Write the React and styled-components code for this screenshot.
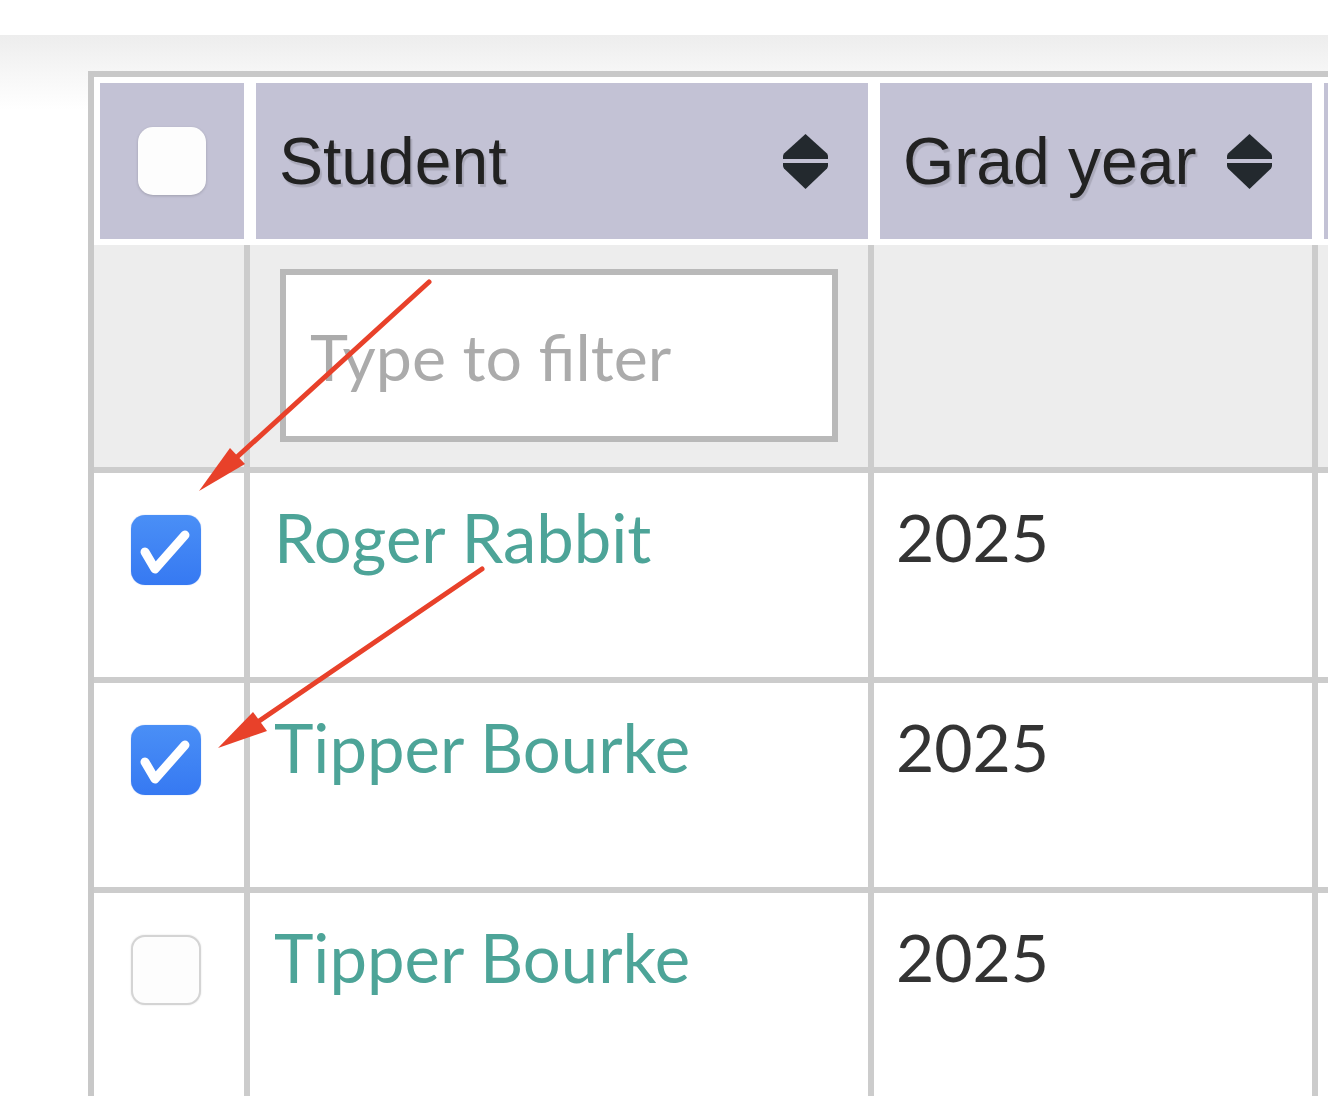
import React from 'react';
import styled, { createGlobalStyle } from 'styled-components';

const students = [
  { name: 'Roger Rabbit', year: 2025, checked: true },
  { name: 'Tipper Bourke', year: 2025, checked: true },
  { name: 'Tipper Bourke', year: 2025, checked: false },
];

function SortIcon() {
  return (
    <SortSvg viewBox="0 0 45 55">
      <path d="M22.5 0 L44 19.5 Q45 21 45 22.5 V25 H0 V22.5 Q0 21 1 19.5 Z" />
      <path d="M0 29 H45 V31.5 Q45 33 44 34.5 L22.5 55 L1 34.5 Q0 33 0 31.5 Z" />
    </SortSvg>
  );
}

function Checkbox({ checked }) {
  return (
    <Box checked={checked}>
      {checked && (
        <svg width="70" height="70" viewBox="0 0 70 70">
          <polyline
            points="14,37 24,54 54,20"
            fill="none"
            stroke="#fff"
            strokeWidth="9"
            strokeLinecap="round"
            strokeLinejoin="round"
          />
        </svg>
      )}
    </Box>
  );
}

function Arrows() {
  return (
    <Overlay width="1328" height="1096" viewBox="0 0 1328 1096">
      <line x1="429" y1="282" x2="225" y2="468" stroke="#e8412a" strokeWidth="5" strokeLinecap="round" />
      <polygon points="199,491 230,448 245,464" fill="#e8412a" />
      <line x1="482" y1="569" x2="246" y2="730" stroke="#e8412a" strokeWidth="5" strokeLinecap="round" />
      <polygon points="218,748 253,712 267,731" fill="#e8412a" />
    </Overlay>
  );
}

function App() {
  return (
    <Page>
      <GlobalStyle />
      <Band>
        <Table>
          <HeadRow>
            <HeadCell center>
              <HeadBox />
            </HeadCell>
            <HeadCell>
              <HeadLabel>Student</HeadLabel>
              <SortIcon />
            </HeadCell>
            <HeadCell>
              <HeadLabel>Grad year</HeadLabel>
              <SortIcon />
            </HeadCell>
            <HeadCell />
          </HeadRow>
          <Body>
            <FilterRow>
              <FilterCell />
              <FilterCell>
                <FilterInput placeholder="Type to filter" />
              </FilterCell>
              <FilterCell />
              <FilterCell />
            </FilterRow>
            {students.map((s, i) => (
              <Row key={i}>
                <CheckCell>
                  <Checkbox checked={s.checked} />
                </CheckCell>
                <Cell>
                  <NameLink href="#">{s.name}</NameLink>
                </Cell>
                <YearCell>{s.year}</YearCell>
                <Cell />
              </Row>
            ))}
          </Body>
        </Table>
      </Band>
      <Arrows />
    </Page>
  );
}

const GlobalStyle = createGlobalStyle`
  html, body {
    margin: 0;
    padding: 0;
    background: #fff;
    overflow: hidden;
  }
  body {
    font-family: Lato, "Liberation Sans", sans-serif;
  }
`;

const Page = styled.div`
  position: relative;
  width: 1328px;
  height: 1096px;
  overflow: hidden;
  padding-top: 35px;
  box-sizing: border-box;
`;

const Band = styled.div`
  background: linear-gradient(#ededed 0px, #f7f7f7 40px, #ffffff 75px);
  padding: 36px 0 0 88px;
`;

const Table = styled.div`
  border-left: 6px solid #c8c8c8;
  border-top: 6px solid #c8c8c8;
  width: 1400px;
  background: #fff;
`;

const columns = '150px 618px 438px 1fr';

const HeadRow = styled.div`
  display: grid;
  grid-template-columns: ${columns};
  column-gap: 6px;
  padding: 6px 0;
  background: #fff;
`;

const HeadCell = styled.div`
  margin-left: 6px;
  height: 156px;
  background: #c3c2d5;
  display: flex;
  align-items: center;
  justify-content: ${(p) => (p.center ? 'center' : 'space-between')};
  padding: ${(p) => (p.center ? '0' : '0 40px 0 23px')};
`;

const HeadLabel = styled.span`
  font-family: "Liberation Sans", Arial, sans-serif;
  font-size: 66px;
  color: #222;
  text-shadow: 2px 3px 1px rgba(0, 0, 0, 0.13);
`;

const SortSvg = styled.svg`
  width: 45px;
  height: 55px;
  fill: #23292e;
  flex-shrink: 0;
`;

const HeadBox = styled.div`
  width: 68px;
  height: 68px;
  border-radius: 15px;
  background: #fdfdfd;
  box-shadow: 0 1px 3px rgba(0, 0, 0, 0.18);
  filter: blur(0.6px);
`;

const Body = styled.div`
  display: flex;
  flex-direction: column;
  gap: 6px;
  background: #cccccc;
`;

const Row = styled.div`
  display: grid;
  grid-template-columns: ${columns};
  column-gap: 6px;
  height: 204px;
`;

const FilterRow = styled(Row)`
  height: 222px;
`;

const Cell = styled.div`
  background: #fff;
  padding: 24px;
  font-size: 67px;
  color: #333;
`;

const YearCell = styled(Cell)`
  padding: 24px 22px;
  font-size: 66px;
`;

const FilterCell = styled.div`
  background: #ededed;
  padding: 24px 0 0 30px;
`;

const CheckCell = styled(Cell)`
  padding: 42px 0 0 37px;
`;

const NameLink = styled.a`
  color: #4da498;
  text-decoration: none;
`;

const FilterInput = styled.input`
  box-sizing: border-box;
  width: 558px;
  height: 173px;
  border: 6px solid #b9b9b9;
  background: #fff;
  padding: 0 24px;
  font-family: Lato, sans-serif;
  font-size: 64.5px;
  color: #333;
  outline: none;
  &::placeholder {
    color: #ababab;
  }
`;

const Box = styled.div`
  width: 70px;
  height: 70px;
  border-radius: 14px;
  box-sizing: border-box;
  background: ${(p) => (p.checked ? 'linear-gradient(#4a8ff6, #3679f2)' : '#fdfdfd')};
  border: ${(p) => (p.checked ? 'none' : '2px solid #d4d4d4')};
  box-shadow: ${(p) => (p.checked ? '0 0 1px rgba(40, 100, 220, 0.6)' : '0 0 2px rgba(0, 0, 0, 0.12)')};
  filter: blur(0.6px);
`;

const Overlay = styled.svg`
  position: absolute;
  left: 0;
  top: 0;
  pointer-events: none;
`;

export default App;
